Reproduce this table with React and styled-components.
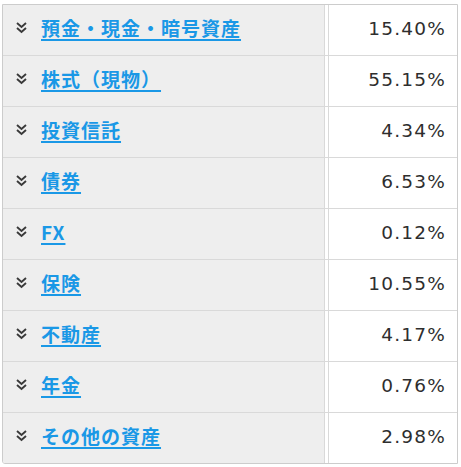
import styled, { createGlobalStyle } from "styled-components";

const Global = createGlobalStyle`
    body {
        margin: 0;
        background: #ffffff;
    }
`;

const Table = styled.div`
    margin: 4px 0 0 2px;
    width: 454px;
    border: 1px solid #cccccc;
    border-radius: 0 0 0 3px;
    overflow: hidden;
`;

const Row = styled.div`
    display: grid;
    grid-template-columns: 322px 1fr;
    column-gap: 3px;
    height: 50px;
    border-bottom: ${(p) => (p.last ? "none" : "1px solid #d9d9d9")};
`;

const Label = styled.div`
    display: flex;
    align-items: center;
    background: #eeeeee;
    border-right: 1px solid #d9d9d9;
    padding: 0 0 5px 12px;
`;

const Icon = styled.svg`
    width: 13px;
    height: 13px;
    margin-right: 13px;
    flex-shrink: 0;
`;

const Name = styled.a`
    font-family: "Noto Sans CJK JP", "Noto Sans", sans-serif;
    font-weight: bold;
    font-size: 19px;
    letter-spacing: 1px;
    color: #1a98e6;
    text-decoration: underline;
    text-decoration-thickness: 2px;
    text-underline-offset: 3px;
    cursor: pointer;
`;

const Value = styled.div`
    display: flex;
    align-items: center;
    justify-content: flex-end;
    border-left: 1px solid #d9d9d9;
    padding: 0 11px 4px 0;
    font-family: "DejaVu Sans", Verdana, sans-serif;
    font-size: 18.5px;
    letter-spacing: 1.2px;
    color: #2e2e2e;
`;

const rows = [
    ["預金・現金・暗号資産", "15.40%"],
    ["株式（現物）", "55.15%"],
    ["投資信託", "4.34%"],
    ["債券", "6.53%"],
    ["FX", "0.12%"],
    ["保険", "10.55%"],
    ["不動産", "4.17%"],
    ["年金", "0.76%"],
    ["その他の資産", "2.98%"],
];

const Chevron = () => (
    <Icon viewBox="0 0 13 13">
        <path d="M2 2 L6.5 6 L11 2" fill="none" stroke="#3a3a3a" strokeWidth="1.9" />
        <path d="M2 7 L6.5 11 L11 7" fill="none" stroke="#3a3a3a" strokeWidth="1.9" />
    </Icon>
);

const App = () => {
    return (
        <>
            <Global />
            <Table>
                {rows.map(([name, pct], i) => (
                    <Row key={name} last={i === rows.length - 1}>
                        <Label>
                            <Chevron />
                            <Name>{name}</Name>
                        </Label>
                        <Value>{pct}</Value>
                    </Row>
                ))}
            </Table>
        </>
    );
};

export default App;
